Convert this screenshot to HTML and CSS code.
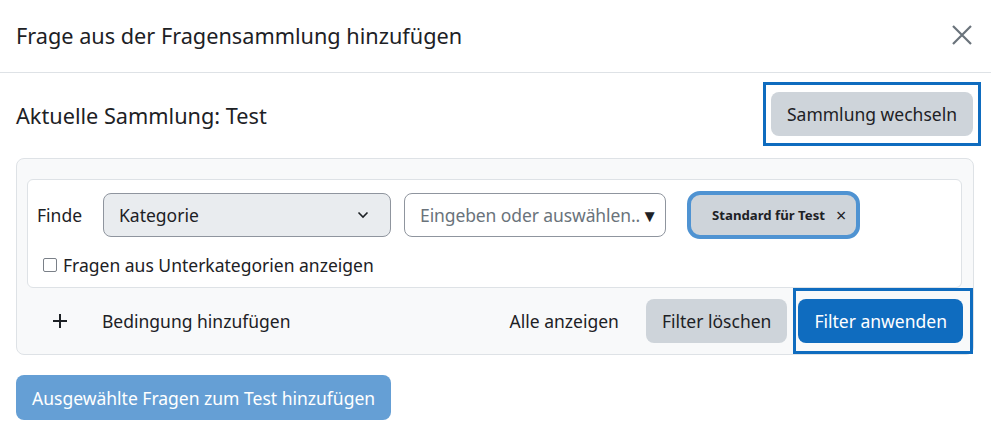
FILE: index.html
```
<!DOCTYPE html>
<html lang="de">
<head>
<meta charset="utf-8">
<link rel="stylesheet" href="styles.css">
</head>
<body>
<div class="modal">
  <div class="modal-header">
    <h5 class="title">Frage aus der Fragensammlung hinzufügen</h5>
    <button class="close" aria-label="Schließen">
      <svg width="20" height="20" viewBox="0 0 20 20"><path d="M1 1L19 19M19 1L1 19" stroke="#6a737b" stroke-width="2.2" fill="none"/></svg>
    </button>
  </div>
  <div class="modal-body">
    <div class="bank-row">
      <div class="bank-name">Aktuelle Sammlung: Test</div>
      <div class="highlight hl-top"><button class="btn btn-secondary">Sammlung wechseln</button></div>
    </div>
    <div class="filter-panel">
      <div class="filter-card">
        <div class="cond-row">
          <span class="finde">Finde</span>
          <div class="select">
            <span>Kategorie</span>
            <svg width="12" height="8" viewBox="0 0 12 8"><path d="M1.5 1.5L6 6L10.5 1.5" stroke="#1d2125" stroke-width="1.6" fill="none"/></svg>
          </div>
          <div class="combo">
            <span class="placeholder">Eingeben oder auswählen..</span><span class="tri">▼</span>
          </div>
          <div class="pill"><span class="pill-text">Standard für Test</span><span class="pill-x">×</span></div>
        </div>
        <label class="check-row"><span class="box"></span>Fragen aus Unterkategorien anzeigen</label>
      </div>
      <div class="actions">
        <div class="add-cond">
          <svg class="plus" width="14" height="14" viewBox="0 0 14 14"><path d="M7 0V14M0 7H14" stroke="#1d2125" stroke-width="2" fill="none"/></svg>
          <span>Bedingung hinzufügen</span>
        </div>
        <div class="right-actions">
          <span class="show-all">Alle anzeigen</span>
          <button class="btn btn-secondary">Filter löschen</button>
          <div class="highlight hl-apply"><button class="btn btn-primary">Filter anwenden</button></div>
        </div>
      </div>
    </div>
    <button class="btn btn-primary disabled add-selected">Ausgewählte Fragen zum Test hinzufügen</button>
  </div>
</div>
</body>
</html>
```
FILE: styles.css
```
* { box-sizing: border-box; }
html, body { margin: 0; padding: 0; background: #fff; }
body {
  font-family: "Noto Sans", "Open Sans", sans-serif;
  color: #1d2125;
  font-size: 17.5px;
}
.modal { width: 991px; }
.modal-header {
  height: 73px;
  border-bottom: 1px solid #dee2e6;
  display: flex;
  align-items: center;
  justify-content: space-between;
  padding: 0 18px 0 16px;
}
.title {
  margin: 0;
  font-size: 21.7px;
  font-weight: 400;
  line-height: 1.2;
  padding-top: 1px;
}
.close {
  border: 0;
  background: none;
  padding: 0;
  width: 22px;
  height: 22px;
  display: flex;
  align-items: center;
  justify-content: center;
  margin-bottom: 2px;
}
.modal-body { padding: 9px 17px 16px 16px; }
.bank-row {
  display: flex;
  justify-content: space-between;
  align-items: center;
  height: 64px;
  margin-right: -7px;
}
.bank-name { font-size: 21.7px; line-height: 1.2; padding-top: 5px; }
.highlight { border: 3px solid #0f6cbf; }
.hl-top { padding: 8px 5px; height: 64px; display: flex; align-items: center; }
.btn {
  font-family: inherit;
  font-size: 17.5px;
  border: 0;
  border-radius: 8px;
  height: 44px;
  padding: 0 16px;
  line-height: 44px;
  color: #1d2125;
  cursor: pointer;
  white-space: nowrap;
}
.btn-secondary { background: #ced4da; }
.btn-primary { background: #0f6cbf; color: #fff; }
.btn-primary.disabled { background: #659fd5; }
.filter-panel {
  margin-top: 12px;
  background: #f8f9fa;
  border: 1px solid #dee2e6;
  border-radius: 8px;
  padding: 20px 11px 0 10px;
}
.filter-card {
  background: #fff;
  border: 1px solid #dee2e6;
  border-radius: 6px;
  padding: 13px 10px 10px 9px;
}
.cond-row {
  display: flex;
  align-items: center;
  height: 44px;
}
.finde { width: 66px; }
.select {
  width: 288px;
  height: 44px;
  background: #e9ecef;
  border: 1px solid #8f959e;
  border-radius: 8px;
  display: flex;
  align-items: center;
  justify-content: space-between;
  padding: 0 21px 0 15px;
}
.combo {
  margin-left: 13px;
  width: 262px;
  height: 44px;
  border: 1px solid #8f959e;
  border-radius: 8px;
  display: flex;
  align-items: center;
  padding: 0 10px 0 15px;
  white-space: nowrap;
  overflow: hidden;
}
.placeholder { color: #6a737b; letter-spacing: -0.1px; }
.tri { font-size: 17px; color: #1d2125; margin-left: 1px; }
.pill {
  margin-left: 21px;
  width: 173px;
  height: 48px;
  border: 4px solid #4f93d2;
  border-radius: 13px;
  background: #ced4da;
  display: flex;
  align-items: center;
  padding-left: 21px;
  font-size: 13.2px;
  font-weight: 700;
}
.pill-x { margin-left: 11px; font-size: 18px; font-weight: 400; }
.check-row {
  display: flex;
  align-items: center;
  margin-top: 16px;
  margin-left: 6px;
  height: 24px;
  font-size: 17.5px;
}
.box {
  width: 14px;
  height: 14px;
  border: 1.5px solid #7a8088;
  border-radius: 2px;
  margin-right: 6px;
  background: #fff;
}
.actions {
  display: flex;
  align-items: center;
  justify-content: space-between;
  height: 66px;
}
.add-cond { display: flex; align-items: center; padding-left: 26px; }
.plus { margin-right: 35px; }
.right-actions { display: flex; align-items: center; margin-right: -1px; }
.show-all { margin-right: 27px; }
.hl-apply { margin-left: 6px; padding: 7px 7px 8px 2px; height: 66px; margin-right: -10px; display: flex; align-items: center; }
.add-selected { margin-top: 20px; height: 45px; }
```
